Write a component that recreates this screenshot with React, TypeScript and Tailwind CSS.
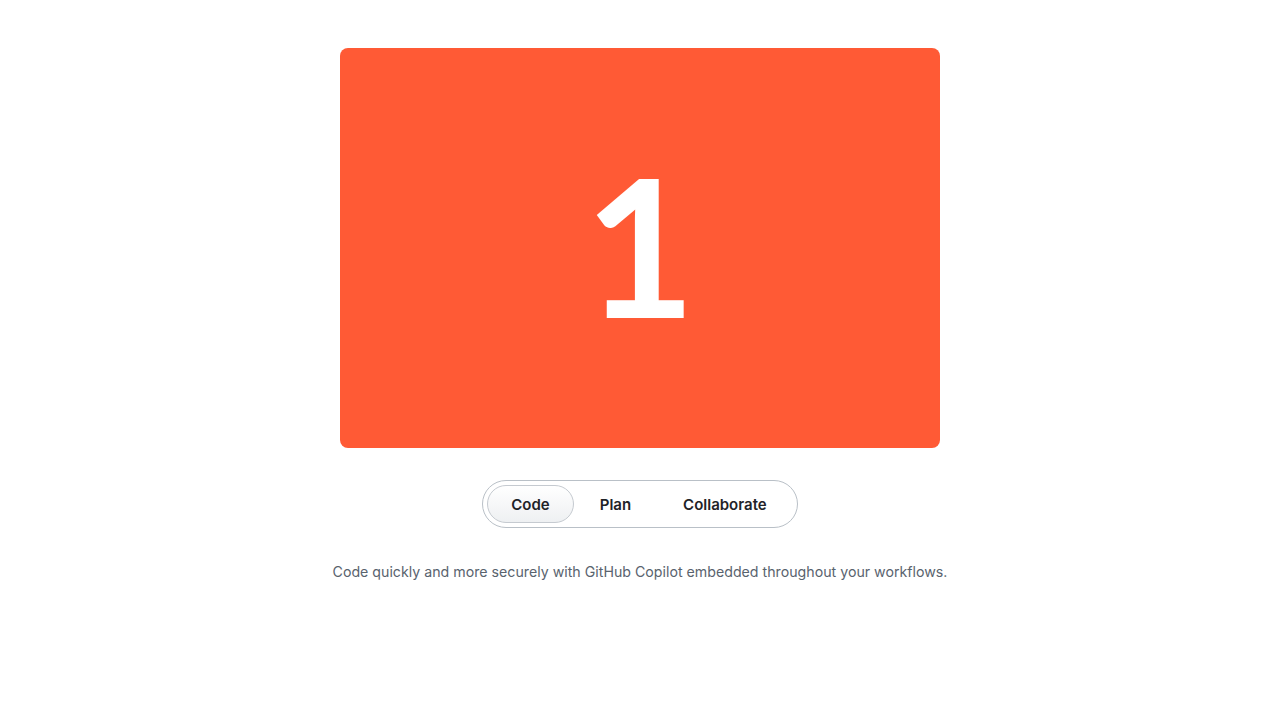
import { useState } from 'react';

const tabs = ['Code', 'Plan', 'Collaborate'];

const captions: Record<string, string> = {
  Code: 'Code quickly and more securely with GitHub Copilot embedded throughout your workflows.',
  Plan: 'Plan and track work with issues, projects and discussions.',
  Collaborate: 'Collaborate on code with pull requests, reviews and comments.',
};

export default function App() {
  const [active, setActive] = useState('Code');
  const index = tabs.indexOf(active) + 1;

  return (
    <div className="min-h-screen bg-white font-['Inter','Noto_Sans',sans-serif]">
      <div className="flex flex-col items-center pt-12">
        <div className="flex h-[400px] w-[600px] items-center justify-center rounded-lg bg-[#ff5a35] pb-[8px]">
          <span className="font-['Lato',sans-serif] text-[192px] leading-none font-bold text-white">{index}</span>
        </div>

        <div className="mt-8 flex h-12 items-center rounded-full border border-[#b9c0c7] p-1">
          {tabs.map(tab => (
            <button
              key={tab}
              onClick={() => setActive(tab)}
              className={
                tab === active
                  ? 'h-[38px] rounded-full border border-[#c5cad0] bg-gradient-to-b from-white to-[#eef0f2] px-[23px] pt-[2px] text-[15px] font-semibold text-[#1f2328]'
                  : 'h-[38px] rounded-full border border-transparent px-[25px] pt-[2px] text-[15px] font-semibold text-[#1f2328]'
              }>
              {tab}
            </button>
          ))}
        </div>

        <p className="mt-[33px] text-[14.2px] text-[#59636e]">{captions[active]}</p>
      </div>
    </div>
  );
}
